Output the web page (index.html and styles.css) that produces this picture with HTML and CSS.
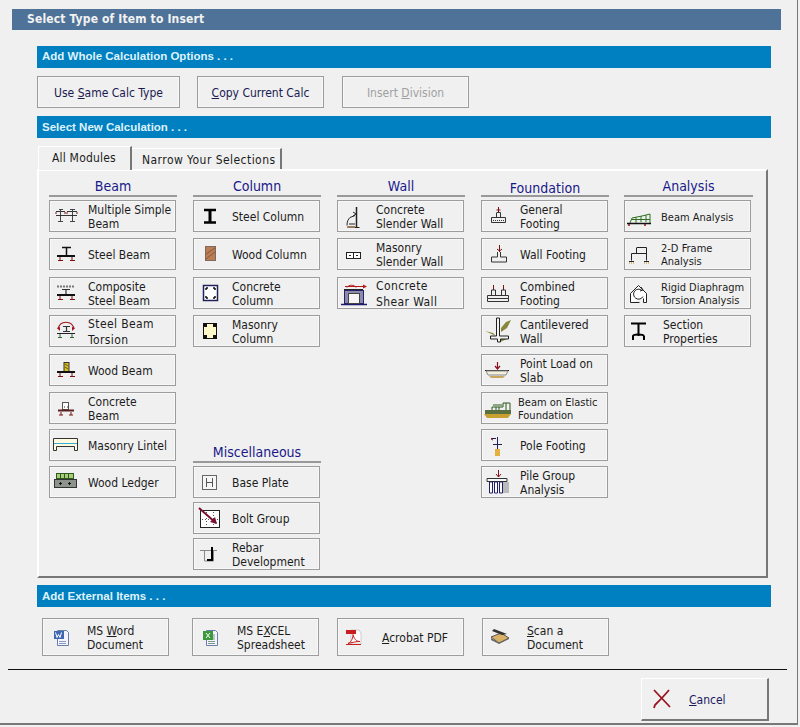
FILE: index.html
```html
<!DOCTYPE html>
<html lang="en">
<head>
    <meta charset="UTF-8">
    <title>Select Type of Item to Insert</title>
    <link rel="stylesheet" href="styles.css">
</head>
<body>
<svg class="defs" width="0" height="0">
    <defs>
        <g id="supports">
            <path d="M0 17h18" stroke="#111" stroke-width="2"/>
            <path d="M3 18v3M15 18v3" stroke="#7a1010"/>
            <path d="M1 21.500h5M13 21.500h5" stroke="#7a1010"/>
        </g>
    </defs>
</svg>
<div class="dialog">
    <div class="title-bar">Select Type of Item to Insert</div>

    <div class="content">
        <div class="section-bar first">Add Whole Calculation Options . . .</div>
        <div class="whole-row">
            <a class="cmd w143"><span>Use <u>S</u>ame Calc Type</span></a>
            <a class="cmd w127"><span><u>C</u>opy Current Calc</span></a>
            <a class="cmd w127 disabled"><span>Insert <u>D</u>ivision</span></a>
        </div>

        <div class="section-bar">Select New Calculation . . .</div>

        <div class="tabs">
            <div class="tab active">All Modules</div>
            <div class="tab">Narrow Your Selections</div>
        </div>

        <div class="panel">
            <div class="grid">
                <h4 class="c1">Beam</h4>
                <h4 class="c2">Column</h4>
                <h4 class="c3">Wall</h4>
                <h4 class="c4 low">Foundation</h4>
                <h4 class="c5">Analysis</h4>

                <!-- Beam -->
                <a class="tool c1 r2"><svg viewBox="0 0 32 30"><path d="M3 10.500h9M14 10.500h10M3 14.500h21" stroke="#333"/><path d="M6 8.500h4M17 8.500h5M7.500 9v5M19.500 9v5M5 20.500h5M17 20.500h5M7.500 15v5M19.500 15v5" stroke="#444"/><path d="M3 11v2M12 11v2M14 11v2M24 11v2" stroke="#7a1010"/></svg><span>Multiple Simple<br>Beam</span></a>
                <a class="tool c1 r3"><svg viewBox="0 0 32 30"><path d="M9 8.500h9M13.500 9v7" stroke="#111" stroke-width="1.500"/><use href="#supports" x="4" y="0"/></svg><span>Steel Beam</span></a>
                <a class="tool c1 r4"><svg viewBox="0 0 32 30"><path d="M4 8.500h17" stroke="#777" stroke-dasharray="2 1" stroke-width="2"/><path d="M9 11.500h8M13 12v5M9 16.500h8" stroke="#333" stroke-width="1.200"/><use href="#supports" x="4" y="0"/></svg><span>Composite<br>Steel Beam</span></a>
                <a class="tool c1 r5"><svg viewBox="0 0 32 30"><path d="M5 13c2-9 14-9 16 0" fill="none" stroke="#a01818" stroke-width="1.200"/><path d="M4 12l3-1v4zM22 12l-3-1v4z" fill="#a01818"/><path d="M10 10.500h7M13.500 10v6M10 15.500h7" stroke="#333" stroke-width="1.200"/><path d="M4 17.500h18" stroke="#222"/><path d="M7 18v4M19 18v4M5 21.500h4M17 21.500h4" stroke="#2e6b3a"/></svg><span class="wide">Steel Beam<br>Torsion</span></a>
                <a class="tool c1 r6"><svg viewBox="0 0 32 30"><rect x="11" y="7.500" width="5" height="9" fill="#d8c020" stroke="#333"/><path d="M12 9l3 2M12 12l3 2" stroke="#6a5a10"/><use href="#supports" x="4" y="0"/></svg><span>Wood Beam</span></a>
                <a class="tool c1 r7"><svg viewBox="0 0 32 30"><rect x="9.500" y="9.500" width="6" height="7" fill="#fff" stroke="#555"/><path d="M11 14h1M14 14h1" stroke="#333"/><path d="M5 17.500h16" stroke="#5a2020" stroke-width="2"/><path d="M8 19v3M18 19v3M6 22h4M16 22h4" stroke="#7a1010"/></svg><span>Concrete<br>Beam</span></a>
                <a class="tool c1 r8"><svg viewBox="0 0 32 30"><path d="M.500 8.500h24v12h-3v-4h-18v4h-3z" fill="#fffbe0" stroke="#333"/><path d="M1 13.500h23" stroke="#35b0d0"/></svg><span>Masonry Lintel</span></a>
                <a class="tool c1 r9"><svg viewBox="0 0 32 30"><rect x="3.500" y="6.500" width="17" height="5" fill="#a8cc78" stroke="#2c5a20"/><path d="M7.500 7v4M11.500 7v4M15.500 7v4" stroke="#2c5a20"/><rect x="1.500" y="12.500" width="22" height="8" fill="#8c948c" stroke="#333"/><path d="M6 16.500h3M7.500 15v3M15 16.500h3M16.500 15v3" stroke="#111"/></svg><span>Wood Ledger</span></a>

                <!-- Column -->
                <a class="tool c2 r2"><svg viewBox="0 0 32 30"><path d="M7 9h12M7 21.500h12" stroke="#000" stroke-width="2.500"/><path d="M13 9v12" stroke="#000" stroke-width="3"/></svg><span>Steel Column</span></a>
                <a class="tool c2 r3"><svg viewBox="0 0 32 30"><rect x="8.500" y="7.500" width="10" height="14" fill="#bb7d55" stroke="#7d6a5a"/><path d="M9 15l9-6M9 20l9-7" stroke="#8a5636"/></svg><span>Wood Column</span></a>
                <a class="tool c2 r4"><svg viewBox="0 0 32 30"><rect x="6.500" y="7.500" width="14" height="15" fill="#fff" stroke="#20205a" stroke-width="1.500"/><path d="M9 10h2M16 10h2M9 20h2M16 20h2M9 10v2M18 10v2M9 18v2M18 18v2" stroke="#111" stroke-width="1.500"/></svg><span>Concrete<br>Column</span></a>
                <a class="tool c2 r5"><svg viewBox="0 0 32 30"><rect x="6.500" y="7.500" width="13" height="15" fill="#fff8c8" stroke="#111"/><path d="M7 8h3v3h-3zM16 8h3v3h-3zM7 19h3v3h-3zM16 19h3v3h-3z" fill="#111"/></svg><span>Masonry<br>Column</span></a>

                <h4 class="c2 misc">Miscellaneous</h4>
                <a class="tool c2 r9"><svg viewBox="0 0 32 30"><rect x="5.500" y="8.500" width="14" height="14" fill="#f6f6f6" stroke="#666"/><path d="M9.500 11v9M15.500 11v9M10 15.500h5" stroke="#555"/></svg><span>Base Plate</span></a>
                <a class="tool c2 r10"><svg viewBox="0 0 32 30"><rect x="3.500" y="7.500" width="19" height="17" fill="#fff" stroke="#222"/><path d="M9.500 9v14M16.500 9v14M5 16.500h16" stroke="#555" stroke-dasharray="1 2"/><path d="M2 5l17 15" stroke="#7a1030" stroke-width="2"/><path d="M20 21l-2-7-5 5z" fill="#7a1030"/></svg><span>Bolt Group</span></a>
                <a class="tool c2 r11"><svg viewBox="0 0 32 30"><path d="M3 11.500h17M7.500 12v10h9v-10" fill="none" stroke="#888"/><path d="M15 8v13h-5" fill="none" stroke="#000" stroke-width="2"/></svg><span>Rebar<br>Development</span></a>

                <!-- Wall -->
                <a class="tool c3 r2"><svg viewBox="0 0 32 30"><path d="M15.500 6v20" stroke="#222" stroke-width="1.500"/><path d="M6.500 26.500h12" stroke="#222"/><path d="M6 24.500c0-4 1-6 3-8l5-2" fill="none" stroke="#222"/><path d="M12 11l3 2-3 2M8 23h6" fill="none" stroke="#222"/><path d="M6 25h8v2h-7z" fill="#9a7a5a"/></svg><span>Concrete<br>Slender Wall</span></a>
                <a class="tool c3 r3"><svg viewBox="0 0 32 30"><rect x="5.500" y="13.500" width="14" height="6" fill="#fff" stroke="#222"/><path d="M12.500 14v5" stroke="#222"/><path d="M8 16h2v1h-2zM15 16h2v1h-2z" fill="#222"/></svg><span>Masonry<br>Slender Wall</span></a>
                <a class="tool c3 r4"><svg viewBox="0 0 32 30"><path d="M0 26.500h26" stroke="#1c1c70" stroke-width="1.500"/><rect x="3.500" y="12.500" width="19" height="13" fill="#8c8ca8" stroke="#24246e"/><rect x="7.500" y="15.500" width="11" height="10" fill="#f6f6f6" stroke="#444"/><path d="M3 11.500h19" stroke="#222"/><path d="M6 9.500c2-3 7-3 9 0M4 8.500h20" fill="none" stroke="#b01a1a"/><path d="M26 8.500l-4-2v4z" fill="#b01a1a"/></svg><span class="wide">Concrete<br>Shear Wall</span></a>

                <!-- Foundation -->
                <a class="tool c4 r2"><svg viewBox="0 0 32 30"><path d="M13.500 6v6" stroke="#7a1010"/><path d="M11.500 9h4" stroke="#7a1010"/><path d="M11.500 11.500h4v5M11.500 12v4.500M6.500 16.500h14v5h-14z" fill="none" stroke="#333"/><path d="M8 19.500h11" stroke="#333" stroke-dasharray="1 1"/></svg><span>General<br>Footing</span></a>
                <a class="tool c4 r3"><svg viewBox="0 0 32 30"><path d="M14.500 6v7M12 10l2.500 2 2.500-2" fill="none" stroke="#7a1010"/><path d="M12.500 13v5h-6v5h15v-5h-6v-5" fill="none" stroke="#333"/></svg><span>Wall Footing</span></a>
                <a class="tool c4 r4"><svg viewBox="0 0 32 30"><path d="M8.500 7v5M18.500 7v5" stroke="#7a1010"/><path d="M6.500 17v-5h4v5M16.500 17v-5h4v5M2.500 17.500h21M2.500 20.500h21v3h-21zM2.500 17.500v3M23.500 17.500v3" fill="none" stroke="#333"/></svg><span>Combined<br>Footing</span></a>
                <a class="tool c4 r5"><svg viewBox="0 0 32 30"><path d="M0 15l8 2 3 3M16 12l5-6 5-2-4 8-6 4M15 26l7-3-7-1z" fill="#87863a"/><path d="M11.500 2h3v18h9v3h-8v3h-3v-3h-7v-3h6z" fill="#f2f2f2" stroke="#222"/></svg><span>Cantilevered<br>Wall</span></a>
                <a class="tool c4 r6"><svg viewBox="0 0 32 30"><path d="M12.500 7v7M10 11l2.500 3 2.500-3" fill="none" stroke="#8a1020" stroke-width="1.200"/><path d="M0 15.500h24" stroke="#222"/><path d="M1 16h22l-2 4h-18z" fill="#f4f0dc" stroke="#888"/><path d="M4 21h16l-2 2h-12z" fill="#c8a860"/></svg><span>Point Load on<br>Slab</span></a>
                <a class="tool c4 r7"><svg viewBox="0 0 32 30"><path d="M7 17v-3h11v-4h7v7" fill="none" stroke="#2a5a1a"/><path d="M11 14v3M14 14v3M21 10v7M8 12h9" stroke="#2a5a1a"/><rect y="17" width="26" height="4" fill="#5a7040"/><path d="M-1 21h27l-3 4h-21z" fill="#c8a030"/></svg><span class="small">Beam on Elastic<br>Foundation</span></a>
                <a class="tool c4 r8"><svg viewBox="0 0 32 30"><path d="M7 8.500h4M12.500 7v12M8 14.500h9" fill="none" stroke="#20205a"/><path d="M7 8l-1 1 2 1" fill="none" stroke="#8a1020"/><rect x="10" y="19" width="5" height="7" fill="#e4b040"/></svg><span>Pole Footing</span></a>
                <a class="tool c4 r9"><svg viewBox="0 0 32 30"><path d="M13.500 3v7M11 7l2.500 3 2.500-3" fill="none" stroke="#8a1020"/><path d="M2 11.500h20v3h-20z" fill="#f8f8f8" stroke="#333"/><path d="M17 15h7v11h-7z" fill="#bbb"/><path d="M4.500 15h3v11h-3zM9.500 15h3v11h-3zM14.500 15h3v11h-3z" fill="#fff" stroke="#20206a"/></svg><span>Pile Group<br>Analysis</span></a>

                <!-- Analysis -->
                <a class="tool c5 r2"><svg viewBox="0 0 32 30"><path d="M-1 22.500h24" stroke="#111" stroke-width="1.500"/><path d="M2 22l2-5 10-2 8-2v9M8 16v6M13 15v6M18 14v7M4 18.500h18" fill="none" stroke="#2e7020"/><path d="M1 23v2M17 23v2" stroke="#8a1010" stroke-width="1.500"/></svg><span class="small">Beam Analysis</span></a>
                <a class="tool c5 r3"><svg viewBox="0 0 32 30"><path d="M8.500 8.500h10v13M18 14.500h-14.500v7" fill="none" stroke="#222"/><path d="M8.500 9v5" stroke="#222"/><path d="M1 22.500h5M16 22.500h5" stroke="#222"/><path d="M1 24h5M16 24h5" stroke="#b08820" stroke-dasharray="1 1"/></svg><span class="small">2-D Frame<br>Analysis</span></a>
                <a class="tool c5 r4"><svg viewBox="0 0 32 30"><path d="M2.500 24.500v-9l8-8 8 8v9h-3v-4M2.500 24.500h9" fill="#fff" stroke="#222"/><path d="M14 12.500a5 5 0 1 0 1 6" fill="none" stroke="#222"/><path d="M13 9l2 3-3 1" fill="none" stroke="#222"/></svg><span class="small">Rigid Diaphragm<br>Torsion Analysis</span></a>
                <a class="tool c5 r5"><svg viewBox="0 0 32 30"><path d="M3 7.500h15M10.500 7v13" stroke="#000" stroke-width="2"/><path d="M5 20c0-2 10-2 11 0" fill="none" stroke="#000" stroke-width="2"/><path d="M5 20v4M16 20v4" stroke="#000" stroke-width="2"/></svg><span>Section<br>Properties</span></a>
            </div>
        </div>

        <div class="section-bar external">Add External Items . . .</div>
        <div class="external-row">
            <a class="tool tall"><svg viewBox="0 0 32 36"><path d="M11.500 11.500h9l2 2v13h-11z" fill="#f4f4ff" stroke="#6a7fa8"/><rect x="8" y="12" width="10" height="8" fill="#3f66b0"/><path d="M9.500 13.500l1.500 5 1.500-3 1.500 3 1.500-5" fill="none" stroke="#fff"/><path d="M13 22.500h7M13 24.500h7" stroke="#8a9ac0"/></svg><span>MS <u>W</u>ord<br>Document</span></a>
            <a class="tool tall"><svg viewBox="0 0 32 36"><path d="M10.500 11.500h9l2 2v13h-11z" fill="#f4f4ff" stroke="#6a7fa8"/><rect x="7" y="12" width="10" height="9" fill="#3c9a3c"/><path d="M10 14l4 5M14 14l-4 5" stroke="#fff"/><path d="M12 22.500h7M12 24.500h7M18 15v6" stroke="#7a9a8a"/></svg><span>MS E<u>X</u>CEL<br>Spreadsheet</span></a>
            <a class="tool tall"><svg viewBox="0 0 32 36"><path d="M10 11h8l2 3v11h-10z" fill="#fff" stroke="#ccc"/><rect x="5" y="11" width="10" height="4" fill="#c81e1e"/><path d="M7 24.500c4-2 5-6 5-9 1 4 3 7 7 7-4 0-8 1-12 2z" fill="none" stroke="#c81e1e"/><path d="M5 25.500h15" stroke="#c81e1e"/></svg><span><u>A</u>crobat PDF</span></a>
            <a class="tool tall"><svg viewBox="0 0 32 36"><path d="M5 18l10-4 8 5-10 5z" fill="#d9b268" stroke="#555"/><path d="M5 19v2l8 4 10-5v-1l-10 5z" fill="#666"/><path d="M8 10l13 5-5 1-10-4z" fill="#333"/></svg><span><u>S</u>can a<br>Document</span></a>
        </div>
    </div>

    <div class="divider"></div>

    <div class="footer">
        <a class="cancel"><svg viewBox="0 0 20 20" width="20" height="20"><path d="M2 1l16 17M17 1c-4 5-9 10-14 15l-1 3" fill="none" stroke="#9a1420" stroke-width="1.800"/></svg><span><u>C</u>ancel</span></a>
    </div>
</div>
</body>
</html>
```

FILE: styles.css
```css
* { box-sizing: border-box; }
html, body { margin: 0; height: 100%; }
body { background: #f0f0f0; font-family: "DejaVu Sans Condensed", "DejaVu Sans", sans-serif; font-size: 12px; color: #1c1c1c; overflow: hidden; }
.defs { position: absolute; }
.dialog { height: 726px; width: 798px; padding-top: 9px; border-top: 1px solid #fff; border-right: 1px solid #777; border-bottom: 2px solid #777; margin-top: -1px; }
.title-bar { margin-left: 12px; width: 769px; height: 21px; background: #4f7298; color: #f2f2f2; font-weight: bold; line-height: 21px; padding-left: 15px; letter-spacing: .15px; }
.content { margin: 16px 0 0 37px; width: 734px; }
.section-bar { height: 22px; background: #0080c0; color: #dff2fb; font-family: "Liberation Sans", Arial, sans-serif; font-size: 11.5px; font-weight: bold; line-height: 23px; padding-left: 5px; }
.section-bar.first { line-height: 21px; }
.whole-row { display: flex; gap: 17px; margin: 8px 0; }
a { text-decoration: none; color: inherit; }
.cmd { display: flex; align-items: center; justify-content: center; height: 32px; border: 1px solid #9c9c9c; box-shadow: inset 0 0 0 1px #f8f8f8; color: #1a1a50; background: #f0f0f0; }
.cmd span, .tool span, .cancel span { margin-top: 2px; }
.w143 { width: 143px; }
.w127 { width: 127px; }
.w127 + .w127 { margin-left: 1px; }
.disabled { color: #a0a0a0; }
.tabs { display: flex; align-items: flex-end; height: 23px; margin: 8px 0 0 1px; position: relative; z-index: 1; }
.tab { height: 21px; padding: 4px 0 0 10px; width: 150px; border-top: 1px solid #fff; border-right: 2px solid #777; background: #f0f0f0; letter-spacing: .45px; }
.tab.active { height: 24px; width: 94px; padding: 4px 0 0 13px; border-left: 1px solid #fff; margin-bottom: -1px; letter-spacing: .2px; }
.panel { width: 731px; height: 409px; border-top: 2px solid #fff; border-left: 2px solid #fff; border-right: 2px solid #777; border-bottom: 2px solid #777; padding: 6px 0 0 10px; }
.grid { display: grid; grid-template-columns: repeat(5, 128px); column-gap: 16px; grid-template-rows: 23px 38px 39px 38px 39px 38px 37px 37px 36px 36px 32px; }
h4 { margin: 0; height: 20px; grid-row: 1; font-weight: normal; font-size: 14px; color: #18188a; text-align: center; border-bottom: 2px solid #999; line-height: 19px; }
h4.low { padding-top: 2px; }
h4.misc { grid-row: 8; align-self: end; height: 24px; margin-bottom: 3px; line-height: 26px; }
.c1 { grid-column: 1; }
.c2 { grid-column: 2; }
.c3 { grid-column: 3; }
.c4 { grid-column: 4; }
.c5 { grid-column: 5; margin-left: -1px; }
.r2 { grid-row: 2; }
.r3 { grid-row: 3; }
.r4 { grid-row: 4; }
.r5 { grid-row: 5; }
.r6 { grid-row: 6; }
.r7 { grid-row: 7; }
.r8 { grid-row: 8; }
.r9 { grid-row: 9; }
.r10 { grid-row: 10; }
.r11 { grid-row: 11; }
.tool { display: flex; align-items: center; width: 127px; height: 32px; border: 1px solid #9c9c9c; box-shadow: inset 0 0 0 1px #f8f8f8; padding-left: 3px; line-height: 14px; background: #f0f0f0; }
.tool svg { flex: none; width: 32px; height: 30px; margin-right: 3px; overflow: visible; }
.tool .small { font-size: 11px; margin-left: -2px; line-height: 13px; }
.tool .wide { line-height: 16px; letter-spacing: .4px; }
.tall { height: 38px; }
.tall svg { height: 36px; margin-right: 9px; }
.external { margin-top: 7px; }
.external-row { display: flex; gap: 23px; margin: 11px 0 0 5px; }
.external-row .tool:nth-child(3) { margin-left: -5px; }
.external-row .tool:nth-child(4) { margin-left: -5px; }
.divider { margin: 13px 0 0 8px; width: 779px; height: 1px; background: #111; }
.footer { display: flex; justify-content: flex-end; padding: 8px 28px 0 0; }
.cancel { display: flex; align-items: center; width: 128px; height: 43px; border-top: 1px solid #fff; border-left: 1px solid #fff; border-right: 2px solid #777; border-bottom: 2px solid #777; padding-left: 10px; color: #1a1a60; }
.cancel svg { margin-right: 17px; }
```
